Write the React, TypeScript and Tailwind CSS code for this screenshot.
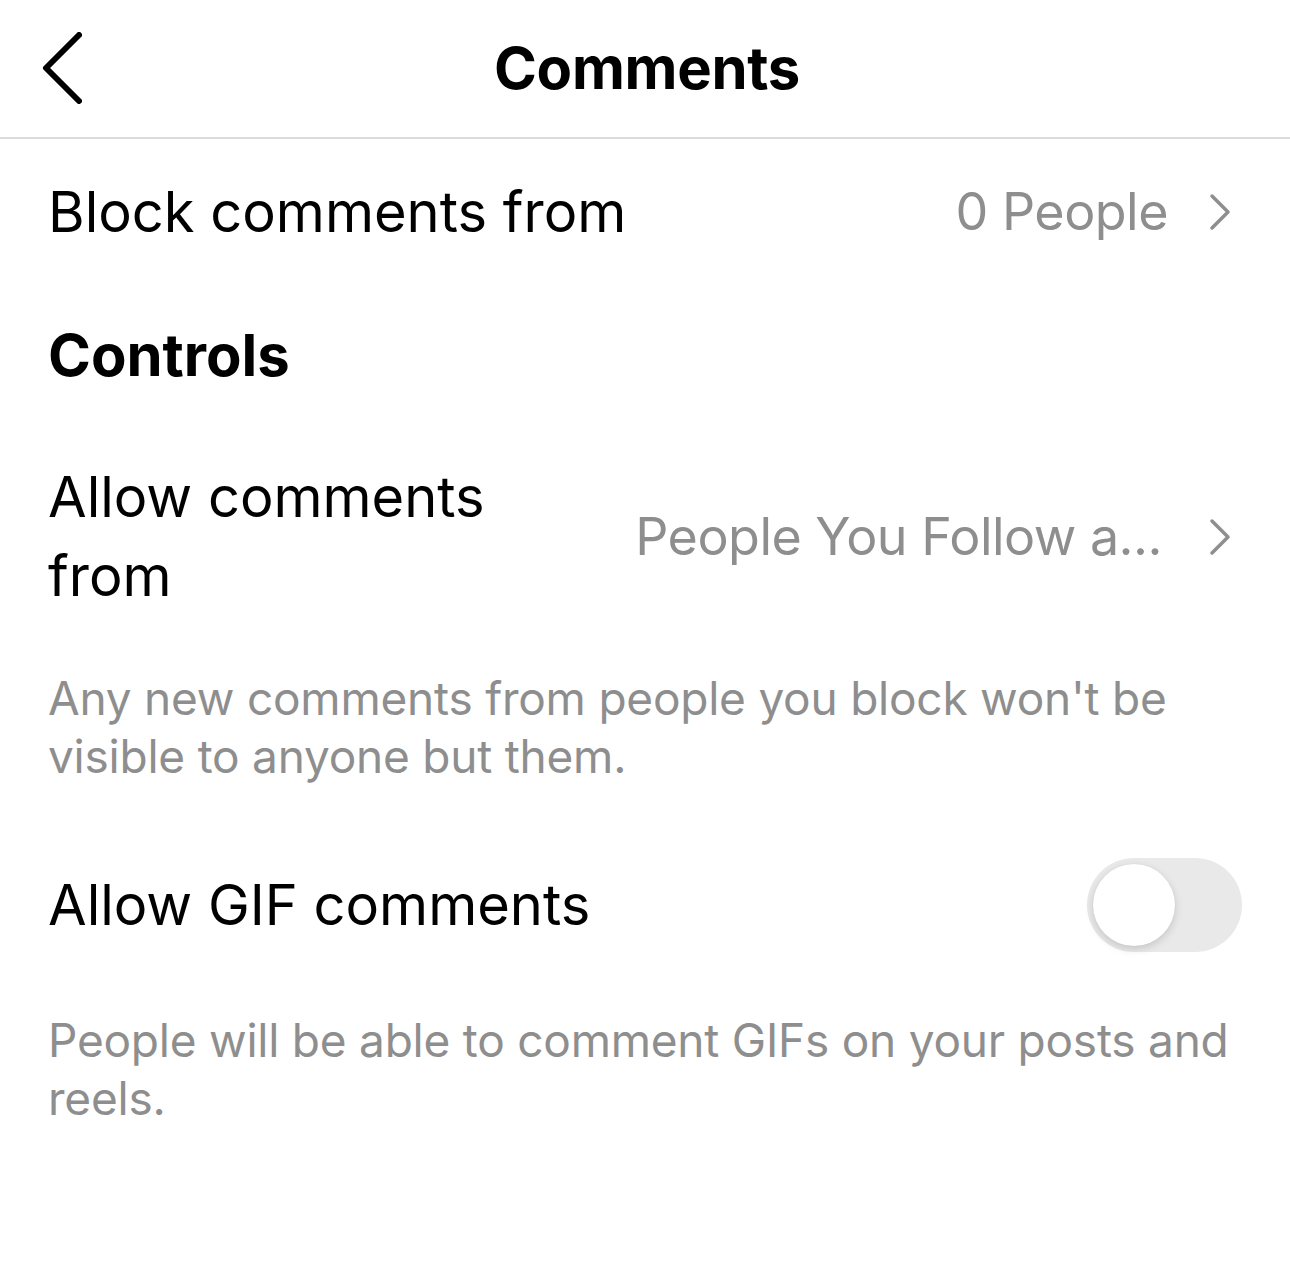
import React from "react";

function Chevron({ className }: { className?: string }) {
  return (
    <svg viewBox="0 0 24 40" className={className} fill="none">
      <path d="M4 4 L20 20 L4 36" stroke="currentColor" strokeWidth="3.5" strokeLinecap="round" strokeLinejoin="round" />
    </svg>
  );
}

function Toggle() {
  return (
    <div className="flex h-[94px] w-[155px] items-center rounded-full bg-[#e9e9ea] px-[6px]">
      <div className="h-[82px] w-[82px] rounded-full bg-white shadow-[0_3px_8px_rgba(0,0,0,0.15),0_0_1px_rgba(0,0,0,0.1)]" />
    </div>
  );
}

export default function App() {
  return (
    <div className="min-h-[1282px] w-[1290px] bg-white text-black" style={{ fontFamily: "Inter, 'Noto Sans', sans-serif" }}>
      <header className="relative flex h-[139px] items-center justify-center border-b-2 border-[#dbdbdb]">
        <svg viewBox="0 0 44 72" className="absolute left-[38px] top-[32px] h-[72px] w-[44px]" fill="none">
          <path d="M41 3 L8 36 L41 69" stroke="black" strokeWidth="6" strokeLinecap="round" strokeLinejoin="round" />
        </svg>
        <h1 className="pl-[4px] text-[58px] font-bold tracking-[-0.005em]">Comments</h1>
      </header>

      <div className="flex h-[146px] items-center justify-between pl-[48px] pr-[58px]">
        <span className="text-[56px]">Block comments from</span>
        <div className="flex items-center gap-[40px]">
          <span className="text-[52px] tracking-[-0.01em] text-[#8e8e8e]">0 People</span>
          <Chevron className="h-[40px] w-[24px] text-[#8e8e8e]" />
        </div>
      </div>

      <div className="flex h-[140px] items-center pl-[48px]">
        <h2 className="text-[58px] font-bold">Controls</h2>
      </div>

      <div className="flex items-center justify-between pl-[48px] pr-[58px] pt-[33px]">
        <span className="w-[480px] text-[56px] leading-[79px]">Allow comments from</span>
        <div className="flex items-center gap-[46px]">
          <span className="text-[52px] tracking-[-0.01em] text-[#8e8e8e]">People You Follow a...</span>
          <Chevron className="h-[40px] w-[24px] text-[#8e8e8e]" />
        </div>
      </div>

      <p className="pl-[48px] pr-[50px] pt-[53px] text-[46px] leading-[58px] tracking-[-0.005em] text-[#8e8e8e]">
        Any new comments from people you block won't be visible to anyone but them.
      </p>

      <div className="mt-[25px] flex h-[190px] items-center justify-between pl-[48px] pr-[48px]">
        <span className="text-[56px]">Allow GIF comments</span>
        <Toggle />
      </div>

      <p className="pl-[48px] pr-[36px] pt-[11px] text-[46px] leading-[58px] tracking-[-0.005em] text-[#8e8e8e]">
        People will be able to comment GIFs on your posts and reels.
      </p>
    </div>
  );
}
